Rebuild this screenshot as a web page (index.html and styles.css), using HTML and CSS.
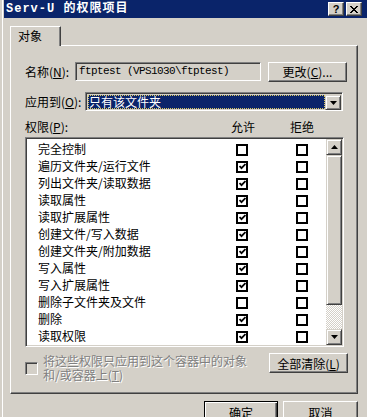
FILE: index.html
```html
<!DOCTYPE html>
<html>
  <head>
    <meta charset="utf-8">
    <title>Serv-U 的权限项目</title>
    <link rel="stylesheet" href="styles.css">
  </head>
  <body>
    <div class="window">
      <div class="titlebar">
        <span class="title">Serv-U 的权限项目</span>
        <span class="tbtn help">?</span>
        <span class="tbtn close">
          <svg width="8" height="7" viewBox="0 0 8 7"><path d="M0 0L7 7M1 0L8 7M7 0L0 7M8 0L1 7" stroke="#000" stroke-width="1"/></svg>
        </span>
      </div>

      <div class="tabs">
        <div class="tab">对象</div>
      </div>
      <div class="panel">
        <div class="row">
          <span class="label name-label">名称(<u>N</u>):</span>
          <div class="textbox">ftptest (VPS1030\ftptest)</div>
          <div class="btn change">更改(<u>C</u>)...</div>
        </div>

        <div class="row apply">
          <span class="label apply-label">应用到(<u>O</u>):</span>
          <div class="combo">
            <span class="combo-value">只有该文件夹</span>
            <span class="sbtn">
              <svg width="7" height="4" viewBox="0 0 7 4"><path d="M0 0H7L3.5 4Z" fill="#000"/></svg>
            </span>
          </div>
        </div>

        <div class="perm-head">
          <span class="head-label">权限(<u>P</u>):</span>
          <span>允许</span>
          <span class="deny">拒绝</span>
        </div>

        <div class="listbox">
          <div class="rows" id="rows"></div>
          <div class="scrollbar">
            <span class="sbtn">
              <svg width="7" height="4" viewBox="0 0 7 4"><path d="M0 4H7L3.5 0Z" fill="#000"/></svg>
            </span>
            <span class="thumb"></span>
            <span class="track"></span>
            <span class="sbtn">
              <svg width="7" height="4" viewBox="0 0 7 4"><path d="M0 0H7L3.5 4Z" fill="#000"/></svg>
            </span>
          </div>
        </div>

        <div class="bottom">
          <div class="inherit">
            <span class="cb disabled"></span>
            <span class="inherit-text">将这些权限只应用到这个容器中的对象<br>和/或容器上(<u>T</u>)</span>
          </div>
          <div class="btn clear">全部清除(<u>L</u>)</div>
        </div>
      </div>

      <div class="footer">
        <div class="btn ok">确定</div>
        <div class="btn cancel">取消</div>
      </div>
    </div>

    <script>
      // permission rows: name, allow, deny
      var perms = [
        ["完全控制", 0, 0],
        ["遍历文件夹/运行文件", 1, 0],
        ["列出文件夹/读取数据", 1, 0],
        ["读取属性", 1, 0],
        ["读取扩展属性", 1, 0],
        ["创建文件/写入数据", 1, 0],
        ["创建文件夹/附加数据", 1, 0],
        ["写入属性", 1, 0],
        ["写入扩展属性", 1, 0],
        ["删除子文件夹及文件", 0, 0],
        ["删除", 1, 0],
        ["读取权限", 1, 0]
      ];

      var check =
        '<svg width="7" height="7" viewBox="0 0 7 7"><polyline points="0.5,3 2.5,5.2 6.5,1" fill="none" stroke="#000" stroke-width="1.8"/></svg>';

      var html = "";
      for (var i = 0; i < perms.length; i++) {
        html +=
          "<div class='perm'><span>" + perms[i][0] + "</span>" +
          "<span class='cb'>" + (perms[i][1] ? check : "") + "</span>" +
          "<span></span>" +
          "<span class='cb'>" + (perms[i][2] ? check : "") + "</span></div>";
      }
      document.getElementById("rows").innerHTML = html;
    </script>
  </body>
</html>
```

FILE: styles.css
```css
body {
  margin: 0;
  width: 367px;
  height: 417px;
  overflow: hidden;
  background-color: #d4d0c8;
  font-family: "Noto Sans CJK SC", sans-serif;
  font-size: 12px;
  color: #000;
}

u {
  text-decoration: underline;
}

.window {
  margin-left: 2px;
  border-left: 1px solid #fff;
  padding-left: 1px;
  height: 417px;
}

/* title bar */
.titlebar {
  height: 18px;
  background-color: #0a246a;
  display: flex;
  align-items: center;
  padding-right: 5px;
}

.title {
  flex: 1;
  padding-left: 2px;
  color: #fff;
  font-family: "Liberation Mono", "Noto Sans CJK SC", monospace;
  font-weight: bold;
  font-size: 12px;
  letter-spacing: 1px;
  line-height: 18px;
}

.tbtn {
  width: 16px;
  height: 14px;
  box-sizing: border-box;
  background-color: #d4d0c8;
  border: 1px solid;
  border-color: #fff #404040 #404040 #fff;
  box-shadow: inset -1px -1px #808080;
  display: flex;
  align-items: center;
  justify-content: center;
}

.help {
  margin-right: 2px;
  font-family: "Liberation Sans", sans-serif;
  font-weight: bold;
  font-size: 11px;
  line-height: 12px;
}

/* tabs */
.tabs {
  display: flex;
  margin-top: 8px;
  padding-left: 6px;
}

.tab {
  position: relative;
  z-index: 1;
  width: 51px;
  height: 20px;
  box-sizing: border-box;
  margin-bottom: -1px;
  padding-left: 7px;
  background-color: #d4d0c8;
  border: 1px solid;
  border-color: #fff #404040 transparent #fff;
  border-bottom: none;
  box-shadow: inset -1px 0 #808080;
  line-height: 17px;
}

.panel {
  margin-left: 6px;
  width: 348px;
  height: 349px;
  box-sizing: border-box;
  border: 1px solid;
  border-color: #fff #404040 #404040 #fff;
  box-shadow: inset -1px -1px #808080;
  padding: 16px 9px 0 14px;
}

.row {
  display: flex;
  align-items: center;
  height: 19px;
}

.apply {
  margin-top: 11px;
}

.name-label {
  width: 50px;
}

.apply-label {
  width: 60px;
}

.label {
  white-space: nowrap;
  line-height: 14px;
}

.textbox {
  width: 186px;
  height: 19px;
  box-sizing: border-box;
  border: 1px solid;
  border-color: #808080 #fff #fff #808080;
  box-shadow: inset 1px 1px #404040;
  padding-left: 3px;
  font-family: "Liberation Mono", monospace;
  font-size: 11px;
  letter-spacing: -0.6px;
  line-height: 17px;
  white-space: pre;
}

.btn {
  box-sizing: border-box;
  background-color: #d4d0c8;
  border: 1px solid;
  border-color: #fff #404040 #404040 #fff;
  box-shadow: inset -1px -1px #808080;
  display: flex;
  align-items: center;
  justify-content: center;
  white-space: nowrap;
}

.change {
  width: 79px;
  height: 20px;
  margin-left: 7px;
}

.combo {
  width: 258px;
  height: 19px;
  box-sizing: border-box;
  border: 1px solid;
  border-color: #808080 #fff #fff #808080;
  box-shadow: inset 1px 1px #404040;
  padding: 2px 1px 1px 2px;
  display: flex;
}

.combo-value {
  flex: 1;
  background-color: #0a246a;
  color: #fff;
  outline: 1px dotted #d8c860;
  outline-offset: -1px;
  padding-left: 1px;
  line-height: 14px;
}

.sbtn {
  width: 16px;
  height: 15px;
  box-sizing: border-box;
  background-color: #d4d0c8;
  border: 1px solid;
  border-color: #d4d0c8 #404040 #404040 #d4d0c8;
  box-shadow: inset 1px 1px #fff, inset -1px -1px #808080;
  display: flex;
  align-items: center;
  justify-content: center;
}

/* permissions list */
.perm-head {
  display: flex;
  margin-top: 9px;
  height: 14px;
  line-height: 14px;
}

.head-label {
  width: 206px;
}

.deny {
  margin-left: 35px;
}

.listbox {
  margin-top: 3px;
  width: 319px;
  height: 210px;
  box-sizing: border-box;
  border: 1px solid;
  border-color: #808080 #fff #fff #808080;
  box-shadow: inset 1px 1px #404040, inset -1px -1px #d4d0c8;
  padding: 1px;
  display: flex;
}

.rows {
  flex: 1;
  background-color: #fff;
  padding-top: 1px;
}

.perm {
  display: grid;
  grid-template-columns: 198px 12px 48px 12px;
  align-items: center;
  height: 17px;
  padding-left: 11px;
  line-height: 17px;
}

.cb {
  width: 12px;
  height: 12px;
  box-sizing: border-box;
  border: 2px solid #000;
  background-color: #fff;
  margin-top: 2px;
  display: flex;
  align-items: center;
  justify-content: center;
}

.scrollbar {
  width: 16px;
  display: flex;
  flex-direction: column;
}

.scrollbar .sbtn {
  height: 16px;
}

.thumb {
  height: 150px;
  box-sizing: border-box;
  background-color: #d4d0c8;
  border: 1px solid;
  border-color: #d4d0c8 #404040 #404040 #d4d0c8;
  box-shadow: inset 1px 1px #fff, inset -1px -1px #808080;
}

.track {
  flex: 1;
  background-color: #eceae6;
  background-image: repeating-conic-gradient(#fff 0 25%, #d4d0c8 0 50%);
  background-size: 2px 2px;
}

/* bottom options */
.bottom {
  display: flex;
  justify-content: space-between;
  margin-top: 6px;
}

.inherit {
  display: flex;
  align-items: flex-start;
}

.cb.disabled {
  width: 13px;
  height: 13px;
  margin-top: 9px;
  border: 1px solid;
  border-color: #808080 #fff #fff #808080;
  box-shadow: inset 1px 1px #404040, inset -1px -1px #d4d0c8;
  background-color: #d4d0c8;
}

.inherit-text {
  margin-left: 5px;
  margin-top: 1px;
  color: #808080;
  text-shadow: 1px 1px #fff;
  line-height: 14px;
}

.clear {
  width: 79px;
  height: 20px;
}

.footer {
  display: flex;
  justify-content: flex-end;
  gap: 5px;
  margin-top: 7px;
  padding-right: 9px;
}

.ok,
.cancel {
  width: 75px;
  height: 23px;
}

.ok {
  width: 74px;
  border-color: #000;
  box-shadow: inset 1px 1px #fff, inset -1px -1px #404040, inset -2px -2px #808080;
}
```
